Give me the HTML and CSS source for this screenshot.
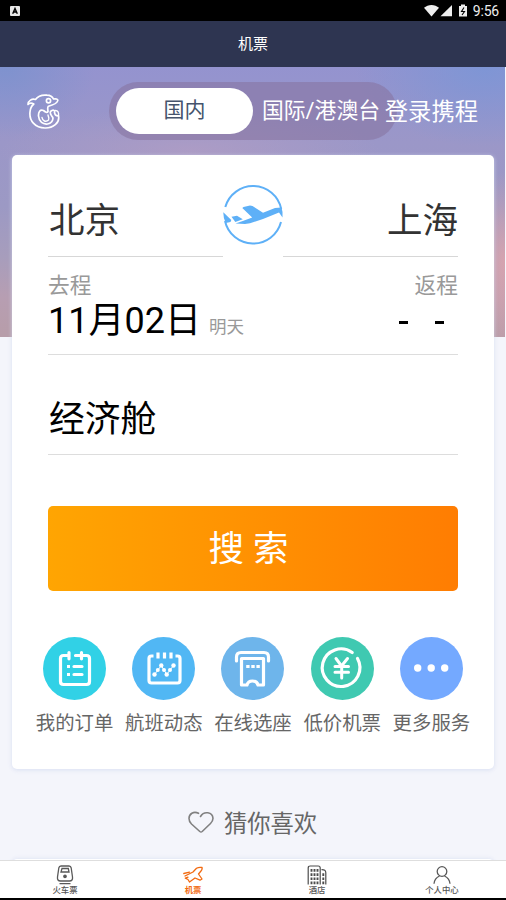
FILE: index.html
```html
<!DOCTYPE html>
<html lang="zh-CN">
<head>
<meta charset="utf-8">
<title>机票</title>
<link rel="stylesheet" href="styles.css">
</head>
<body>
<div class="screen">
  <div class="status">
    <svg class="status-app" width="10" height="10" viewBox="0 0 10 10"><rect width="10" height="10" rx="1" fill="#e8e8e8"/><path d="M2.7 7.800L5 2.500l2.300 5.300M3.600 6h2.800" fill="none" stroke="#000" stroke-width="1.400"/></svg>
    <div class="status-right">
      <svg width="44" height="14" viewBox="0 0 44 14" fill="#eee"><path d="M0 3.800C4-.1 11-.1 15 3.800L7.500 12.400z"/><path d="M28 1v11.200H16.500z"/><path d="M35 2h2V.5h4V2h2v10.500h-8z"/><path d="M40 3.500L37.500 7.500h3l-2.500 3.500" fill="none" stroke="#000" stroke-width="1.100"/></svg>
      <span class="clock">9:56</span>
    </div>
  </div>
  <header class="title">机票</header>
  <main class="content">
    <div class="hero-bg"></div>
    <div class="top">
      <svg class="logo" width="34" height="36" viewBox="0 0 34 36" fill="none" stroke="#fff" stroke-width="1.700" stroke-linejoin="round" stroke-linecap="round"><path d="M1 10.500C1 6.500 5 4.500 8.500 5.500C11 2 16 .8 20 1.200C23.500 1.300 25.500 2.800 26.500 5C28.500 4.500 31 5 30.800 6.500C30.500 9 26 11 21.500 12.200C20 13.500 21 15.500 21 17.500C20 19 18.500 18.300 16.500 16.500C13 15 11.300 18 11.500 22C12 28 16 30.500 20.500 30C24 29.500 26.500 26.500 25.800 23.500C24.500 21.500 22.500 20 23.500 17.500C26 15.300 28 16 27.500 18.500C28 21 28.500 21.500 31.500 22C33 29 26 34.200 18 34C8 34 2 26.500 3 18C3.200 14 4.500 12 6.800 10C4.500 8.800 2.500 9 1 10.500z"/><path d="M15 23.500C15.500 27 19 28.500 21.500 26C22.800 24 21 22.500 21 21M28 16.500C31 16.300 32 18.500 31.500 22" stroke-width="1.400"/><circle cx="21.500" cy="6.800" r="2.100"/></svg>
      <div class="switch"><span class="switch-on">国内</span><span class="switch-off">国际/港澳台</span></div>
      <a class="login">登录携程</a>
    </div>
    <section class="card">
      <div class="cities">
        <div class="city">北京</div>
        <svg class="swap" width="60" height="60" viewBox="0 0 60 60"><g fill="none" stroke="#5eb0f7" stroke-width="2"><path d="M2.300 22A28.800 28.800 0 0 1 58.200 24"/><path d="M58 37A28.800 28.800 0 0 1 2 36"/></g><path fill="#5eb0f7" d="M.3 27.300L8.300 35L7.500 37L2.700 38Q.2 33 .3 27.300zM8.500 31.700l5.500-1 5.800 3.500-7.500 2.700zM19.300 23l1.200-1 6.500-1.500 2.500 .5L40 27.700l12-4.600 6.500-.7 1 4.600v5.500l-3.500-5L40 34 27 38.300l-5 .7-9.500-.4 8-2.800 8.700-3.200z"/></svg>
        <div class="city city-to">上海</div>
      </div>
      <div class="dates">
        <div><div class="label">去程</div><div class="date">11月02日<small>明天</small></div></div>
        <div class="return"><div class="label">返程</div><div class="dashes"><i></i><i></i></div></div>
      </div>
      <div class="cabin">经济舱</div>
      <button class="search">搜 索</button>
      <div class="services">
        <div class="service"><svg width="63" height="63" viewBox="0 0 63 63"><circle cx="31.500" cy="31.500" r="31.500" fill="#31d1e6"/><g fill="none" stroke="#fff" stroke-width="3.200" stroke-linecap="round"><path d="M25 18.500h-4.500q-3 0-3 3v23q0 3 3 3h23q3 0 3-3v-23q0-3-3-3h-4.500M26 15.500v6.300M38.500 15.500v6.300M32.500 18.500h6M31 29.500h8M31 37.500h8"/></g><path d="M24 28h3v3h-3zm0 8h3v3h-3z" fill="#fff"/></svg><span>我的订单</span></div>
        <div class="service"><svg width="63" height="63" viewBox="0 0 63 63"><circle cx="31.500" cy="31.500" r="31.500" fill="#51b7f4"/><path d="M21.500 19h-2q-2.500 0-2.500 2.500v22q0 2.500 2.500 2.500h26q2.500 0 2.500-2.500v-22Q48 19 45.500 19h-2" fill="none" stroke="#fff" stroke-width="3.200"/><path d="M26 15.500v6M32.500 15.500v6M39 15.500v6" stroke="#fff" stroke-width="3.200"/><path d="M22.500 37.500L29.300 28.500L34.700 37.500L41.500 28.500" fill="none" stroke="#fff" stroke-width="1"/><g fill="#fff"><circle cx="22.500" cy="37.500" r="2.200"/><circle cx="25.800" cy="33" r="2"/><circle cx="29.300" cy="28.500" r="2.200"/><circle cx="32" cy="33" r="2"/><circle cx="34.700" cy="37.500" r="2.200"/><circle cx="38" cy="33" r="2"/><circle cx="41.500" cy="28.500" r="2.200"/></g></svg><span>航班动态</span></div>
        <div class="service"><svg width="63" height="63" viewBox="0 0 63 63"><circle cx="31.500" cy="31.500" r="31.500" fill="#6eb5eb"/><path d="M15.500 24v-4q0-4.500 4.500-4.500h23q4.500 0 4.500 4.500v4M20.500 21.500h22v26.500h-5.500q-1-4-5.500-4t-5.500 4h-5.500z" fill="none" stroke="#fff" stroke-width="3.200" stroke-linecap="round" stroke-linejoin="round"/><path d="M25.200 29.500h15" stroke="#fff" stroke-width="3" stroke-dasharray="3.400 1.700"/></svg><span>在线选座</span></div>
        <div class="service"><svg width="63" height="63" viewBox="0 0 63 63"><circle cx="31.500" cy="31.500" r="31.500" fill="#3fc9b1"/><g fill="none" stroke="#fff" stroke-linecap="round"><path d="M41.200 15.500A18.800 18.800 0 1 0 46.500 21.500" stroke-width="3.200"/><path d="M25 21.500l5.500 7.500L36.500 21.500M30.700 29.500v11.500M24 29.500h13.500M24 35.200h13.500" stroke-width="3"/></g></svg><span>低价机票</span></div>
        <div class="service"><svg width="63" height="63" viewBox="0 0 63 63"><circle cx="31.500" cy="31.500" r="31.500" fill="#74a9ff"/><g fill="#fff"><circle cx="17.700" cy="31" r="3.700"/><circle cx="31.200" cy="31" r="3.700"/><circle cx="44.700" cy="31" r="3.700"/></g></svg><span>更多服务</span></div>
      </div>
    </section>
    <div class="guess"><svg width="26" height="22" viewBox="0 0 26 22" fill="none" stroke="#808080" stroke-width="1.600" stroke-linecap="round" stroke-linejoin="round"><path d="M10.500 2.300C5.500-.3 1 3 1 7.500c0 2.500 1 4 2.500 5.500L11.800 20.500q1.200 1 2.400 0L22.500 12.500C24 11 25 9.500 25 7.300 24.500 1 16-.5 12.500 5.500"/></svg><span>猜你喜欢</span></div>
    <div class="next-card"></div>
  </main>
  <nav class="tabs">
    <a class="tab"><svg width="20" height="20" viewBox="0 0 20 20" fill="none" stroke="#595959" stroke-width="1.300"><path d="M6 1h8q1.800 0 2.200 2L17.500 12q.5 4-3 4h-9q-3.500 0-3-4L3.800 3Q4.200 1 6 1z"/><path d="M7 3.500h6.300l.7 3.500H6zM4.500 18.700h11"/><circle cx="10" cy="11.300" r="1.200" fill="#595959"/></svg><span>火车票</span></a>
    <a class="tab active"><svg width="20" height="20" viewBox="0 0 20 20" fill="none" stroke="#f26a10" stroke-width="1.300" stroke-linejoin="round" stroke-linecap="round"><path d="M.8 8.500L6.500 7.200M2 11L10 7L13.500 3.300Q16 1.800 19 2.500Q19.500 4.500 18 6L15.500 9L19 14L17 15.200L12 13L6.500 17L5 14.500L2.300 13.200L5 12.200"/></svg><span>机票</span></a>
    <a class="tab"><svg width="20" height="20" viewBox="0 0 20 20" fill="none" stroke="#4d4d4d" stroke-width="1.200"><path d="M1.200 19.500V3q0-2 2-2h8q2 0 2 2v16.500M14.500 4.700q4.300-.2 4.300 3v11.800"/><path d="M4.500 4v15.500M7.500 4v15.500M10.500 4v15.500M16.300 8.200v11.300" stroke-width="1.900" stroke-dasharray="2.700 1.500"/></svg><span>酒店</span></a>
    <a class="tab"><svg width="20" height="20" viewBox="0 0 20 20" fill="none" stroke="#595959" stroke-width="1.300"><circle cx="10" cy="6.500" r="4.800"/><path d="M2 18.800c.3-4 2.700-6.500 5.500-7.800M18 18.800c-.3-4-2.700-6.500-5.500-7.800"/></svg><span>个人中心</span></a>
  </nav>
</div>
</body>
</html>
```

FILE: styles.css
```css
* { box-sizing: border-box; }
body { margin: 0; background: #000; font-family: Roboto, "Noto Sans CJK SC", sans-serif; }
.screen { width: 506px; height: 900px; display: flex; flex-direction: column; overflow: hidden; padding-bottom: 2px; }
svg { display: block; flex: none; }
.status { height: 21px; flex: none; display: flex; justify-content: space-between; align-items: center; padding: 0 7px 0 10px; }
.status-right { display: flex; align-items: center; gap: 5px; }
.clock { color: #eee; font-size: 14px; line-height: 21px; letter-spacing: -.2px; padding-top: 1px; }
.title { height: 46px; flex: none; background: #2e3551; color: #fff; font-size: 15px; line-height: 47px; text-align: center; }
.content { position: relative; height: 793px; flex: none; background: #f4f5fb; overflow: hidden; }
.hero-bg {
  position: absolute; top: 0; left: 0; width: 505px; height: 270px;
  background:
    radial-gradient(ellipse 130px 80px at 485px 0, rgba(124,150,214,.9), transparent),
    radial-gradient(ellipse 90px 70px at 5px 0, rgba(124,146,206,.9), transparent),
    radial-gradient(ellipse 190px 45px at 190px 85px, rgba(180,158,196,.7), transparent),
    radial-gradient(ellipse 40px 90px at 505px 195px, rgba(226,165,172,.8), transparent),
    linear-gradient(#9493cf 0, #9b97c8 75px, #9c99c4 140px, #a79dbc 190px, #b79eb2 230px, #b79da9 270px);
}
.top { position: relative; height: 88px; display: flex; padding: 15px 28px 0 27px; }
.logo { margin-top: 12px; }
.switch { width: 288px; height: 58px; margin-left: 48px; padding: 6px 7px; display: flex; border-radius: 29px; background: rgba(134,116,160,.58); font-size: 21px; line-height: 45px; white-space: nowrap; }
.switch-on { width: 137px; height: 46px; border-radius: 23px; background: #fff; color: #45536c; text-align: center; flex: none; }
.switch-off { margin-left: 9px; color: #fff; font-size: 21.8px; line-height: 46px; }
.login { margin-left: -12px; color: #fff; font-size: 23.3px; line-height: 60px; white-space: nowrap; position: relative; }
.card { position: relative; height: 614px; margin: 0 12px; padding: 0 36px; background: #fff; border-radius: 5px; box-shadow: 0 1px 4px rgba(210,217,240,.8); }
.cities { height: 102px; display: grid; grid-template-columns: 175px 60px 175px; }
.city { border-bottom: 1px solid #d7d7d7; font-size: 35.5px; line-height: 132px; color: #333; height: 102px; padding-left: 1px; }
.city-to { text-align: right; padding: 0; }
.swap { margin-top: 30px; }
.dates { height: 98px; display: flex; justify-content: space-between; border-bottom: 1px solid #ddd; }
.label { padding-top: 13px; color: #999; font-size: 21.7px; line-height: 31px; }
.date { font-size: 36px; line-height: 40px; color: #000; white-space: nowrap; }
.date small { margin-left: 8px; color: #999; font-size: 17.5px; }
.return { text-align: right; }
.dashes { display: flex; gap: 27px; justify-content: flex-end; padding: 20px 14px 0 0; }
.dashes i { width: 9px; height: 3px; background: #000; }
.cabin { height: 100px; padding-left: 1px; border-bottom: 1px solid #ddd; font-size: 35.8px; line-height: 131px; color: #000; }
.search { display: block; width: 410px; height: 85px; margin-top: 51px; padding: 2px 9px 0 0; border: 0; border-radius: 5px; background: linear-gradient(90deg, #ffa502, #ff7d02); color: #fff; font: 35.5px/83px Roboto, "Noto Sans CJK SC", sans-serif; }
.services { display: grid; grid-template-columns: repeat(5, 1fr); margin: 45.5px -18px 0; }
.service { display: flex; flex-direction: column; align-items: center; color: #666; font-size: 19.4px; line-height: 30px; white-space: nowrap; }
.service span { margin-top: 9.5px; }
.guess { height: 90px; display: flex; justify-content: center; align-items: center; gap: 10px; padding: 16px 1px 0 0; color: #666; font-size: 23.3px; }
.next-card { height: 20px; margin: 0 12px; background: #fff; border-radius: 5px; box-shadow: 0 0 4px rgba(210,217,240,.8); }
.tabs { position: relative; height: 38px; flex: none; display: grid; grid-template-columns: 130px 126px 122px 128px; background: #fff; border-top: 1px solid #dedede; }
.tab { display: flex; flex-direction: column; align-items: center; padding-top: 4px; color: #555; font-size: 8.4px; line-height: 11px; font-weight: 500; }
.active { color: #f26a10; font-weight: 700; }
```
